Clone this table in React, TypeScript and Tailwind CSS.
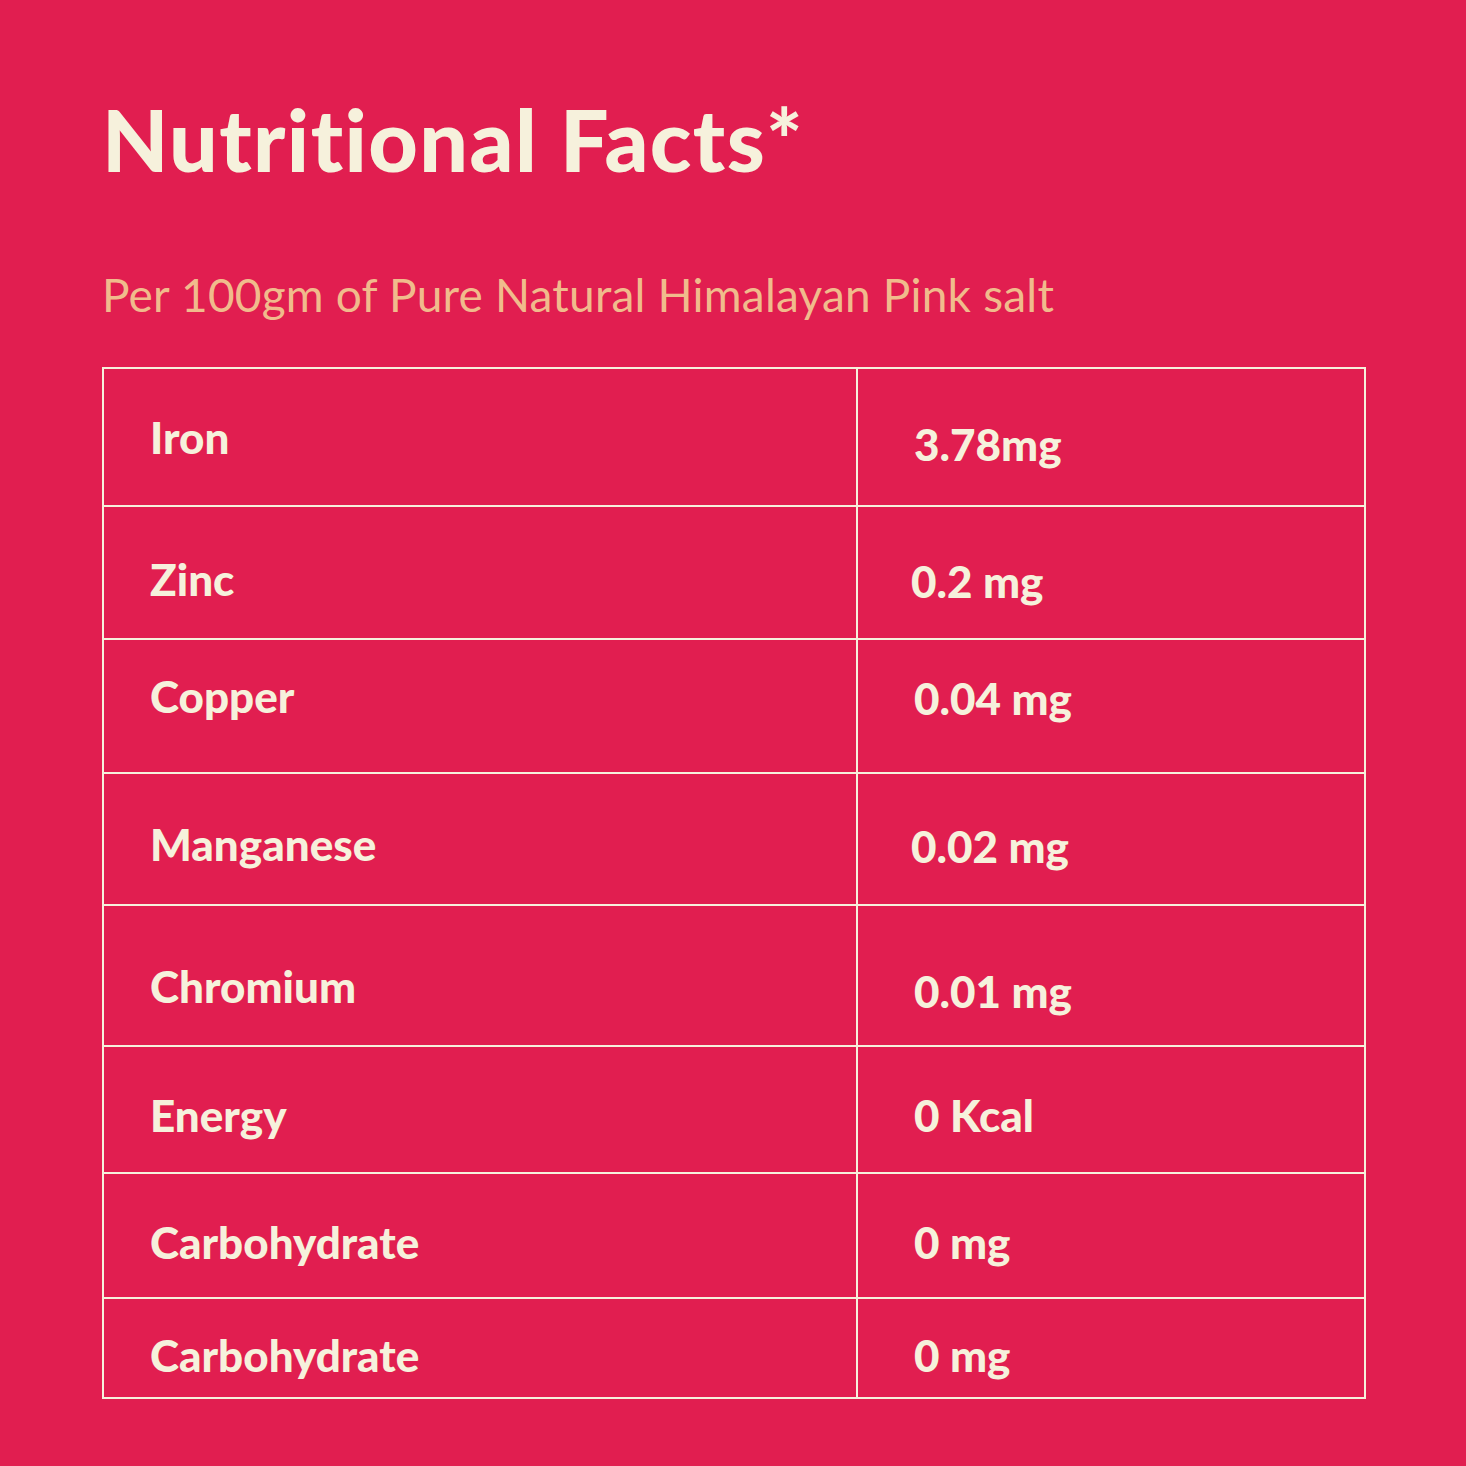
const rows = [
  { name: 'Iron', value: '3.78mg', row: 'h-[136px]', a: '', b: 'pt-[14px]', vx: 'pl-[56px]' },
  { name: 'Zinc', value: '0.2 mg', row: 'h-[133px]', a: 'pt-[12px]', b: 'pt-[16px]', vx: 'pl-[53px]' },
  { name: 'Copper', value: '0.04 mg', row: 'h-[134px]', a: 'pb-[20px]', b: 'pb-[16px]', vx: 'pl-[56px]' },
  { name: 'Manganese', value: '0.02 mg', row: 'h-[132px]', a: 'pt-[10px]', b: 'pt-[14px]', vx: 'pl-[53px]' },
  { name: 'Chromium', value: '0.01 mg', row: 'h-[141px]', a: 'pt-[20px]', b: 'pt-[30px]', vx: 'pl-[56px]' },
  { name: 'Energy', value: '0 Kcal', row: 'h-[127px]', a: 'pt-[10px]', b: 'pt-[10px]', vx: 'pl-[56px]' },
  { name: 'Carbohydrate', value: '0 mg', row: 'h-[125px]', a: 'pt-[12px]', b: 'pt-[12px]', vx: 'pl-[56px]' },
  { name: 'Carbohydrate', value: '0 mg', row: 'h-[100px]', a: 'pt-[14px]', b: 'pt-[14px]', vx: 'pl-[56px]' },
];

export default function App() {
  return (
    <div className="w-[1466px] h-[1466px] bg-[#e11e50] text-[#f6f1dc] pl-[102px] pt-[96px] font-['Lato','Open_Sans',sans-serif]">
      <h1 className="text-[86px] font-black leading-none tracking-[1.4px]">Nutritional Facts*</h1>
      <p className="mt-[90px] text-[46px] leading-none tracking-[0.2px] text-[#f0bb8c]">
        Per 100gm of Pure Natural Himalayan Pink salt
      </p>
      <div className="mt-[49px] w-[1264px] border-2 border-[#f6f1dc]">
        {rows.map((r, i) => (
          <div
            key={i}
            className={`grid grid-cols-[754px_1fr] ${r.row} ${i > 0 ? 'border-t-2 border-[#f6f1dc]' : ''}`}
          >
            <div className="flex items-center border-r-2 border-[#f6f1dc] pl-[46px] text-[44px] font-black">
              <span className={r.a}>{r.name}</span>
            </div>
            <div className={`flex items-center text-[44px] font-black ${r.vx}`}>
              <span className={r.b}>{r.value}</span>
            </div>
          </div>
        ))}
      </div>
    </div>
  );
}
